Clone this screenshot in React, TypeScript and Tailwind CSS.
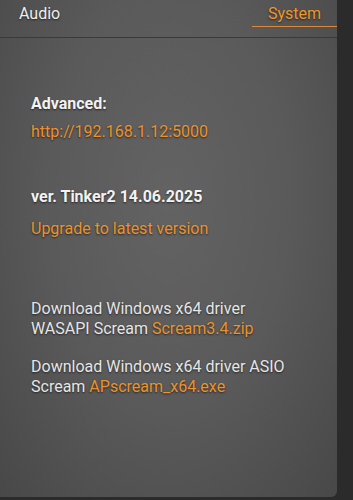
export default function App() {
  const shadow = "[text-shadow:0_1px_2px_rgba(0,0,0,0.6)]";
  return (
    <div className="flex h-[500px] w-[353px] bg-[#2b2b2b] font-['Roboto',sans-serif]">
      <div className="flex h-[497px] w-[337px] flex-col rounded-br-md bg-[radial-gradient(ellipse_at_50%_40%,#636363_0%,#5a5a5a_50%,#484848_100%)]">
        <div className="flex h-[38px] items-start border-b border-[#3a3a3a]">
          <div className={`flex-1 pl-[19px] pt-[2px] text-[16px] text-[#eeeeee] ${shadow}`}>Audio</div>
          <div className={`-mb-px flex w-[85px] justify-center border-b border-[#d8893a] pt-[2px] text-[16px] text-[#f0962a] ${shadow}`}>
            System
          </div>
        </div>
        <div className={`pl-[31px] text-[16px] leading-[20px] ${shadow}`}>
          <div className="mt-[56px] font-bold text-[#f2f2f2]">Advanced:</div>
          <div className="mt-[8px] text-[#ec922a]">http://192.168.1.12:5000</div>
          <div className="mt-[45px] font-bold text-[#f2f2f2]">ver. Tinker2 14.06.2025</div>
          <div className="mt-[12px] text-[#ec922a]">Upgrade to latest version</div>
          <div className="mt-[60px] text-[#e6e6e6]">
            Download Windows x64 driver
            <br />
            WASAPI Scream <span className="text-[#ec922a]">Scream3.4.zip</span>
          </div>
          <div className="mt-[18px] text-[#e6e6e6]">
            Download Windows x64 driver ASIO
            <br />
            Scream <span className="text-[#ec922a]">APscream_x64.exe</span>
          </div>
        </div>
      </div>
    </div>
  );
}
